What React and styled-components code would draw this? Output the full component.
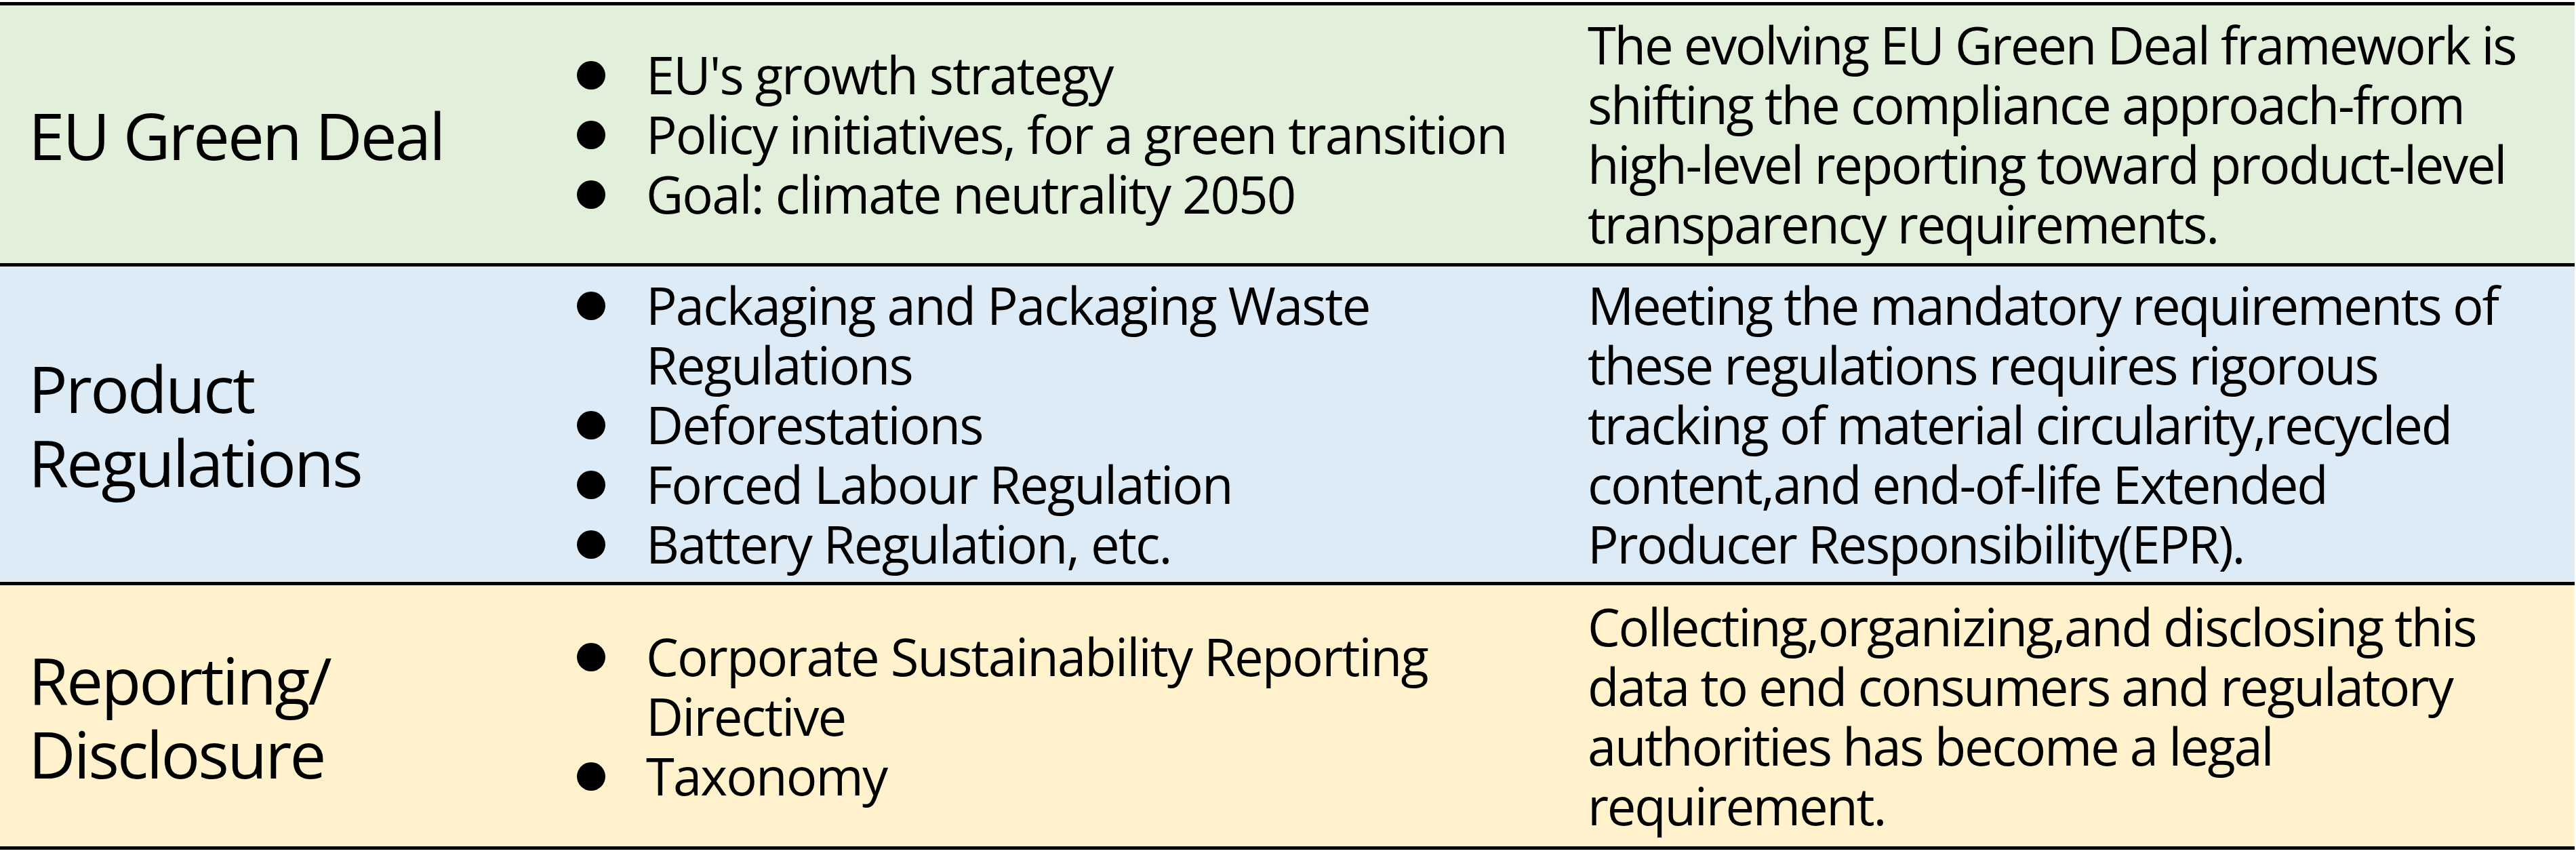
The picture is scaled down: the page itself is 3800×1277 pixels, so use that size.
import React from 'react'
import styled, { createGlobalStyle } from 'styled-components'

const GlobalStyle = createGlobalStyle`
  html, body {
    margin: 0;
    padding: 0;
    background: #ffffff;
  }
  body {
    color: #000000;
    font-family: 'Open Sans', 'Noto Sans', 'Liberation Sans', sans-serif;
  }
`

const rows = [
  {
    title: ['EU Green Deal'],
    bg: '#e2efda',
    height: 380,
    points: [
      "EU's growth strategy",
      'Policy initiatives, for a green transition',
      'Goal: climate neutrality 2050',
    ],
    note: [
      'The evolving EU Green Deal framework is',
      'shifting the compliance approach-from',
      'high-level reporting toward product-level',
      'transparency requirements.',
    ],
  },
  {
    title: ['Product Regulations'],
    bg: '#ddebf7',
    height: 465,
    points: [
      'Packaging and Packaging Waste Regulations',
      'Deforestations',
      'Forced Labour Regulation',
      'Battery Regulation, etc.',
    ],
    note: [
      'Meeting the mandatory requirements of',
      'these regulations requires rigorous',
      'tracking of material circularity,recycled',
      'content,and end-of-life Extended',
      'Producer Responsibility(EPR).',
    ],
  },
  {
    title: ['Reporting/', 'Disclosure'],
    bg: '#fff2cc',
    height: 385,
    points: ['Corporate Sustainability Reporting Directive', 'Taxonomy'],
    note: [
      'Collecting,organizing,and disclosing this',
      'data to end consumers and regulatory',
      'authorities has become a legal',
      'requirement.',
    ],
  },
]

export default function App() {
  return (
    <>
      <GlobalStyle />
      <Table>
        {rows.map((row) => (
          <Row key={row.title.join('')} bg={row.bg} height={row.height}>
            <TitleCell>
              <Title>
                {row.title.map((part, i) => (
                  <React.Fragment key={part}>
                    {i > 0 && <wbr />}
                    {part}
                  </React.Fragment>
                ))}
              </Title>
            </TitleCell>
            <ListCell>
              <List>
                {row.points.map((point) => (
                  <Item key={point}>
                    <Bullet />
                    <ItemText>{point}</ItemText>
                  </Item>
                ))}
              </List>
            </ListCell>
            <NoteCell>
              <Note>
                {row.note.map((line) => (
                  <NoteLine key={line}>{line}</NoteLine>
                ))}
              </Note>
            </NoteCell>
          </Row>
        ))}
      </Table>
    </>
  )
}

const Table = styled.div`
  border-top: 5px solid #000000;
  display: flex;
  flex-direction: column;
  margin-top: 3px;
  width: 3798px;
`

const Row = styled.div`
  background-color: ${(props) => props.bg};
  border-bottom: 5px solid #000000;
  display: grid;
  grid-template-columns: 830px 1490px 1fr;
  height: ${(props) => props.height}px;
`

const Cell = styled.div`
  align-items: center;
  display: flex;
  min-width: 0;
`

const TitleCell = styled(Cell)`
  padding-left: 42px;
`

const Title = styled.div`
  font-size: 96px;
  letter-spacing: -0.03em;
  line-height: 109px;
  width: 700px;
`

const ListCell = styled(Cell)`
  padding-left: 21px;
`

const List = styled.ul`
  display: flex;
  flex-direction: column;
  list-style: none;
  margin: 0;
  padding: 0;
  width: 100%;
`

const Item = styled.li`
  display: grid;
  gap: 60px;
  grid-template-columns: 42px 1fr;
`

const Bullet = styled.span`
  background-color: #000000;
  border-radius: 50%;
  height: 42px;
  margin-top: 24px;
  width: 42px;
`

const ItemText = styled.span`
  font-size: 76px;
  letter-spacing: -0.025em;
  line-height: 88px;
`

const NoteCell = styled(Cell)`
  padding: 0 8px 0 22px;
`

const Note = styled.p`
  display: flex;
  flex-direction: column;
  font-size: 76px;
  letter-spacing: -0.03em;
  line-height: 88px;
  margin: 0;
`

const NoteLine = styled.span`
  white-space: nowrap;
`
